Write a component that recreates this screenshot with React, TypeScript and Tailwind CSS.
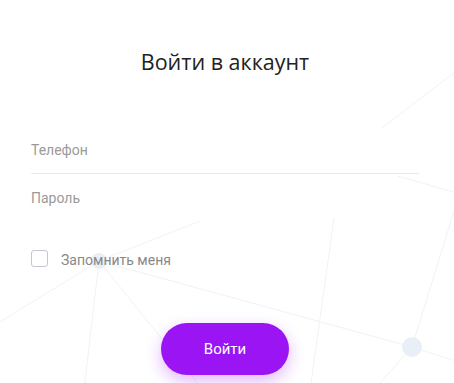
import React from "react";

const lines: [number, number, number, number][] = [
  [460, 68, 382, 128],
  [398, 176, 460, 194],
  [462, 185, 412, 347],
  [334, 218, 310, 390],
  [200, 221, 99, 261],
  [99, 261, -10, 328],
  [99, 261, 84, 390],
  [99, 261, 200, 386],
  [99, 261, 412, 347],
  [412, 347, 462, 363],
  [412, 347, 372, 392],
];

function Network() {
  return (
    <svg className="absolute inset-0 w-full h-full" viewBox="0 0 454 383" preserveAspectRatio="none">
      {lines.map(([x1, y1, x2, y2], i) => (
        <line key={i} x1={x1} y1={y1} x2={x2} y2={y2} stroke="#f0f2f6" strokeWidth="1" />
      ))}
      <circle cx="99" cy="261" r="8" fill="#e9eff7" />
      <circle cx="412" cy="347" r="10" fill="#e9eff7" />
    </svg>
  );
}

export default function App() {
  return (
    <div className="relative w-full h-[383px] bg-white overflow-hidden">
      <Network />
      <div className="relative flex flex-col pl-[31px] pr-[35px]">
        <h1 className="pt-[47px] text-center text-[21.5px] leading-[29px] text-[#222] font-['Open_Sans',sans-serif]">
          Войти в аккаунт
        </h1>

        <div className="mt-[51px] flex flex-col font-['Roboto',sans-serif]">
          <input
            type="tel"
            placeholder="Телефон"
            className="h-[47px] w-[388px] border-b border-[#e9e9ef] bg-transparent text-[14px] text-[#333] placeholder:text-[#9a9a9a] outline-none"
          />
          <input
            type="password"
            placeholder="Пароль"
            className="h-[47px] w-[388px] bg-transparent text-[14px] text-[#333] placeholder:text-[#9a9a9a] outline-none"
          />
        </div>

        <label className="mt-[29px] h-[17px] flex items-center gap-[13px] font-['Roboto',sans-serif]">
          <span className="w-[17px] h-[17px] rounded-[3px] border border-[#c3c6d4] bg-white" />
          <span className="text-[14px] text-[#888] leading-[17px] mt-[3px]">Запомнить меня</span>
        </label>

        <div className="mt-[56px] flex justify-center">
          <button className="w-[128px] h-[52px] rounded-full bg-[#9b15f4] text-white text-[15px] font-['Roboto',sans-serif] shadow-[0_6px_16px_rgba(155,21,244,0.3)]">
            Войти
          </button>
        </div>
      </div>
    </div>
  );
}
